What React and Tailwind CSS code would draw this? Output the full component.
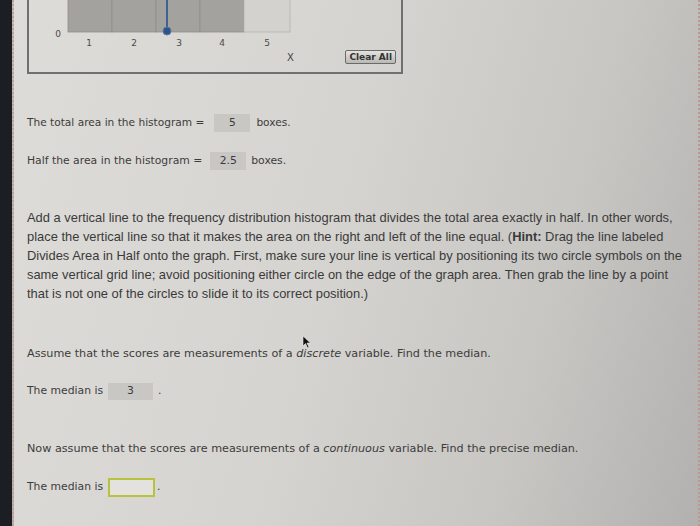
import React from 'react';

function Histogram() {
  const bars = [39, 83, 127, 171];
  const labels = [
    { x: 60, t: '1' },
    { x: 105, t: '2' },
    { x: 150, t: '3' },
    { x: 193, t: '4' },
    { x: 238, t: '5' },
  ];
  return (
    <svg width="372" height="48" className="block">
      {bars.map((x) => (
        <rect key={x} x={x} y="-2" width="44" height="34" fill="#a3a29f" stroke="#8f8e8b" strokeWidth="0.8" />
      ))}
      <rect x="215" y="-2" width="46" height="34" fill="#d3d2ce" stroke="#b4b3b0" strokeWidth="0.8" />
      <line x1="138" y1="0" x2="138" y2="30" stroke="#3f6391" strokeWidth="2" />
      <circle cx="138" cy="31" r="4" fill="#2e5386" stroke="#5b7aa6" strokeWidth="1" />
      <text x="29" y="37" fontSize="9" fill="#4a4a4a" textAnchor="middle" fontFamily="DejaVu Sans, sans-serif">0</text>
      {labels.map((l) => (
        <text key={l.t} x={l.x} y="46" fontSize="9" fill="#4a4a4a" textAnchor="middle" fontFamily="DejaVu Sans, sans-serif">
          {l.t}
        </text>
      ))}
    </svg>
  );
}

function Box({ value, className = '' }) {
  return (
    <span className={`inline-flex items-center justify-center bg-[#c8c7c3] text-[#3a3a3a] ${className}`}>{value}</span>
  );
}

export default function App() {
  return (
    <div className="w-[700px] h-[526px] overflow-hidden flex font-['DejaVu_Sans',sans-serif] text-[#3c3c3c] relative">
      <div className="w-[12px] shrink-0 bg-[#1b1e23]" />
      <div className="flex-1 flex border-l-2 border-dotted border-[#c99d95] bg-[linear-gradient(105deg,#dedcd8_0%,#d6d4d0_45%,#c7c6c3_75%,#b2b1af_100%)]">
        <div className="flex-1 pl-[13px]">
          {/* graph panel */}
          <div className="w-[376px] h-[74px] border-x-2 border-b-2 border-[#707070] flex flex-col">
            <Histogram />
            <div className="h-[18px] flex items-center">
              <span className="ml-[258px] text-[10px] text-[#444]">X</span>
              <button className="ml-auto mr-[5px] h-[14px] px-[3px] text-[9px] font-bold text-[#333] bg-[linear-gradient(#e4e3e0,#b9b8b5)] border border-[#6a6a6a] rounded-[2px] leading-none">
                Clear All
              </button>
            </div>
          </div>

          <div className="mt-[40px] flex items-center h-[18px] text-[10.6px]">
            <span>The total area in the histogram =</span>
            <Box value="5" className="ml-[10px] w-[36px] h-[18px]" />
            <span className="ml-[6px]">boxes.</span>
          </div>
          <div className="mt-[20px] flex items-center h-[18px] text-[10.8px]">
            <span>Half the area in the histogram =</span>
            <Box value="2.5" className="ml-[8px] w-[36px] h-[18px]" />
            <span className="ml-[5px]">boxes.</span>
          </div>

          <p className="mt-[38px] text-[12.9px] leading-[19px] font-['Liberation_Sans',sans-serif] text-[#3a3a3a] whitespace-nowrap">
            Add a vertical line to the frequency distribution histogram that divides the total area exactly in half. In other words,
            <br />
            place the vertical line so that it makes the area on the right and left of the line equal. (<b>Hint:</b> Drag the line labeled
            <br />
            Divides Area in Half onto the graph. First, make sure your line is vertical by positioning its two circle symbols on the
            <br />
            same vertical grid line; avoid positioning either circle on the edge of the graph area. Then grab the line by a point
            <br />
            that is not one of the circles to slide it to its correct position.)
          </p>

          <p className="mt-[44px] text-[11.2px] leading-[14px]">
            Assume that the scores are measurements of a <i>discrete</i> variable. Find the median.
          </p>
          <div className="mt-[22px] flex items-center h-[17px] text-[10.8px]">
            <span>The median is</span>
            <Box value="3" className="ml-[5px] w-[45px] h-[17px]" />
            <span className="ml-[5px]">.</span>
          </div>

          <p className="mt-[42px] text-[11.2px] leading-[14px]">
            Now assume that the scores are measurements of a <i>continuous</i> variable. Find the precise median.
          </p>
          <div className="mt-[22px] flex items-center h-[19px] text-[10.8px]">
            <span>The median is</span>
            <span className="ml-[5px] w-[47px] h-[19px] border-2 border-[#b9c23c] bg-[#e3e2de]" />
            <span className="ml-[2px]">.</span>
          </div>
        </div>
        <div className="w-[2px] border-r-2 border-dotted border-[#b79a96]" />
      </div>
      <svg className="absolute left-[302px] top-[335px]" width="10" height="14" viewBox="0 0 10 14">
        <path d="M1 1 L1 11 L3.5 8.5 L5.5 13 L7 12.3 L5 8 L8.5 8 Z" fill="#111" stroke="#eee" strokeWidth="0.6" />
      </svg>
    </div>
  );
}
